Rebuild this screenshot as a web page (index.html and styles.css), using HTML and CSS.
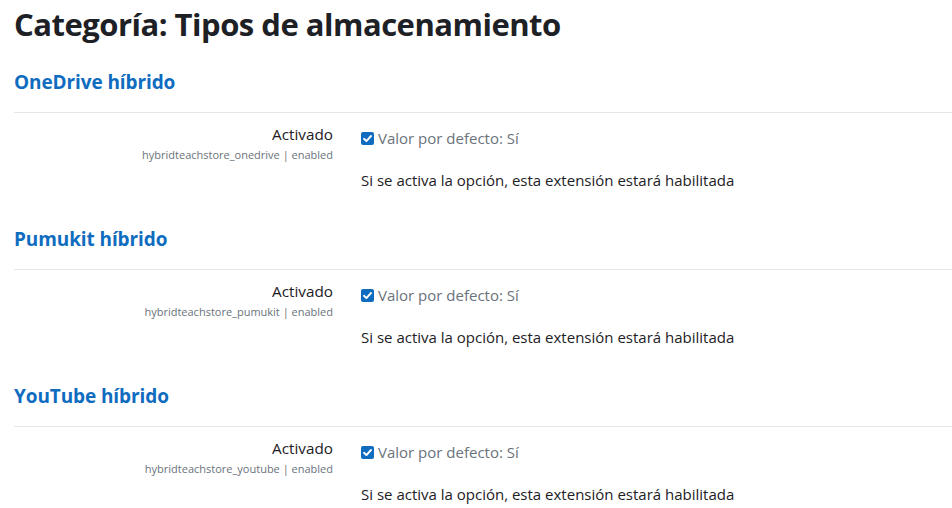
FILE: index.html
```html
<!DOCTYPE html>
<html lang="es">
<head>
<meta charset="utf-8">
<title>Categoría: Tipos de almacenamiento</title>
<link rel="stylesheet" href="styles.css">
</head>
<body>
<main class="page">
  <h2 class="title">Categoría: Tipos de almacenamiento</h2>

  <section class="group">
    <h3 class="group-heading">OneDrive híbrido</h3>
    <div class="setting">
      <div class="label-col">
        <div class="label">Activado</div>
        <div class="key">hybridteachstore_onedrive | enabled</div>
      </div>
      <div class="value-col">
        <div class="default"><span class="check"><svg viewBox="0 0 13 13" width="13" height="13"><rect width="13" height="13" rx="2" fill="#0f6cbf"/><path d="M3 6.8 L5.4 9.1 L10 4" fill="none" stroke="#fff" stroke-width="1.9" stroke-linecap="round" stroke-linejoin="round"/></svg></span>Valor por defecto: Sí</div>
        <div class="desc">Si se activa la opción, esta extensión estará habilitada</div>
      </div>
    </div>
  </section>

  <section class="group">
    <h3 class="group-heading">Pumukit híbrido</h3>
    <div class="setting">
      <div class="label-col">
        <div class="label">Activado</div>
        <div class="key">hybridteachstore_pumukit | enabled</div>
      </div>
      <div class="value-col">
        <div class="default"><span class="check"><svg viewBox="0 0 13 13" width="13" height="13"><rect width="13" height="13" rx="2" fill="#0f6cbf"/><path d="M3 6.8 L5.4 9.1 L10 4" fill="none" stroke="#fff" stroke-width="1.9" stroke-linecap="round" stroke-linejoin="round"/></svg></span>Valor por defecto: Sí</div>
        <div class="desc">Si se activa la opción, esta extensión estará habilitada</div>
      </div>
    </div>
  </section>

  <section class="group">
    <h3 class="group-heading">YouTube híbrido</h3>
    <div class="setting">
      <div class="label-col">
        <div class="label">Activado</div>
        <div class="key">hybridteachstore_youtube | enabled</div>
      </div>
      <div class="value-col">
        <div class="default"><span class="check"><svg viewBox="0 0 13 13" width="13" height="13"><rect width="13" height="13" rx="2" fill="#0f6cbf"/><path d="M3 6.8 L5.4 9.1 L10 4" fill="none" stroke="#fff" stroke-width="1.9" stroke-linecap="round" stroke-linejoin="round"/></svg></span>Valor por defecto: Sí</div>
        <div class="desc">Si se activa la opción, esta extensión estará habilitada</div>
      </div>
    </div>
  </section>
</main>
</body>
</html>
```

FILE: styles.css
```css
html, body {
  margin: 0;
  padding: 0;
  background: #fff;
}
body {
  font-family: "Open Sans", "Noto Sans", "Liberation Sans", sans-serif;
  color: #1d2125;
  font-size: 15px;
}
.page {
  padding: 0 0 0 14px;
}
.title {
  margin: 0;
  padding-top: 2px;
  font-size: 31px;
  font-weight: 700;
  line-height: 44px;
  letter-spacing: -0.5px;
  color: #1d2125;
}
.group-heading {
  margin: 0;
  padding-top: 22px;
  font-size: 19px;
  font-weight: 700;
  line-height: 28px;
  color: #0f6cbf;
  letter-spacing: -0.1px;
}
.setting {
  margin-top: 16px;
  border-top: 1px solid #e6e6e6;
  display: grid;
  grid-template-columns: 319px 1fr;
  column-gap: 28px;
  padding-top: 11px;
  padding-bottom: 13px;
}
.label-col {
  text-align: right;
}
.label {
  font-size: 15.3px;
  line-height: 20px;
  color: #1d2125;
}
.key {
  margin-top: 3px;
  font-size: 11px;
  line-height: 16px;
  color: #6a737b;
}
.value-col {
  padding-top: 3px;
}
.default {
  display: flex;
  align-items: center;
  gap: 4px;
  font-size: 15px;
  line-height: 22px;
  color: #6a737b;
}
.check {
  display: flex;
  width: 13px;
  height: 13px;
}
.desc {
  margin-top: 21px;
  font-size: 15px;
  line-height: 20px;
  color: #1d2125;
}
```
